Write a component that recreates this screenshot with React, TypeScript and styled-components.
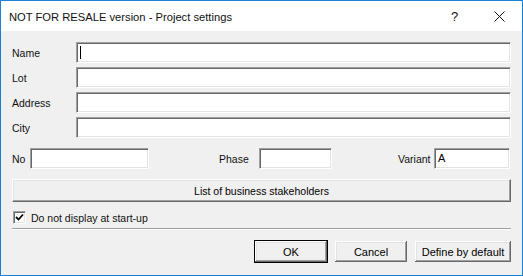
import React from "react";
import styled, { createGlobalStyle } from "styled-components";

const Global = createGlobalStyle`
    html, body {
        margin: 0;
        padding: 0;
        background: #ffffff;
    }
    * {
        box-sizing: border-box;
    }
`

const Window = styled.div`
    width: 523px;
    height: 276px;
    border: 1px solid #1c7fd4;
    background: #f0f0f0;
    display: flex;
    flex-direction: column;
    font-family: "Liberation Sans", Arial, sans-serif;
    font-size: 10.5px;
    color: #000;
`
const TitleBar = styled.div`
    height: 30px;
    background: #ffffff;
    display: flex;
    align-items: center;
    padding-left: 8px;
    flex-shrink: 0;
`
const Title = styled.div`
    flex: 1;
    font-family: "Segoe UI", "Liberation Sans", sans-serif;
    font-size: 11.2px;
    color: #111;
    padding-top: 1px;
`
const TitleButton = styled.div`
    width: 45px;
    height: 29px;
    display: flex;
    align-items: center;
    justify-content: center;
    font-family: "Segoe UI", "Liberation Sans", sans-serif;
    font-size: 13px;
    color: #111;
`
const Body = styled.div`
    flex: 1;
    display: flex;
    flex-direction: column;
    padding: 11px 11px 0 11px;
`
const FieldGrid = styled.div`
    display: grid;
    grid-template-columns: 64px 1fr;
    grid-auto-rows: 21px;
    row-gap: 4px;
    align-items: center;
`
const Label = styled.div<{ $width?: number }>`
    width: ${p => (p.$width ? `${p.$width}px` : "auto")};
    flex-shrink: 0;
    white-space: nowrap;
    padding-top: 1px;
    color: #111;
`
const Field = styled.div<{ $width?: number }>`
    height: 21px;
    width: ${p => (p.$width ? `${p.$width}px` : "auto")};
    background: #ffffff;
    border-top: 1px solid #a0a0a0;
    border-left: 1px solid #a0a0a0;
    border-bottom: 1px solid #ffffff;
    border-right: 1px solid #ffffff;
    box-shadow: inset 1px 1px 0 #696969, inset -1px -1px 0 #e3e3e3;
    display: flex;
    align-items: center;
    padding-left: 3px;
    font-size: 11px;
`
const Caret = styled.span`
    display: inline-block;
    width: 1px;
    height: 13px;
    background: #000;
`
const InfoRow = styled.div`
    display: grid;
    grid-template-columns: 207px 179px 1fr;
    margin-top: 9px;
    height: 22px;
`
const Group = styled.div`
    display: flex;
    align-items: center;
`
const WideButton = styled.div`
    margin-top: 10px;
    height: 23px;
    display: flex;
    align-items: center;
    justify-content: center;
    background: #f0f0f0;
    border-top: 1px solid #ffffff;
    border-left: 1px solid #ffffff;
    border-bottom: 1px solid #696969;
    border-right: 1px solid #696969;
    box-shadow: inset -1px -1px 0 #a0a0a0, inset 1px 1px 0 #e3e3e3;
`
const CheckRow = styled.div`
    display: flex;
    align-items: center;
    gap: 5px;
    margin-top: 8px;
    padding-left: 1px;
    height: 15px;
`
const CheckBox = styled.div`
    width: 13px;
    height: 13px;
    background: #ffffff;
    border-top: 1px solid #a0a0a0;
    border-left: 1px solid #a0a0a0;
    border-bottom: 1px solid #ffffff;
    border-right: 1px solid #ffffff;
    box-shadow: inset 1px 1px 0 #696969, inset -1px -1px 0 #e3e3e3;
    display: flex;
    align-items: center;
    justify-content: center;
`
const Separator = styled.div`
    margin-top: 3px;
    height: 2px;
    border-top: 1px solid #a0a0a0;
    border-bottom: 1px solid #ffffff;
`
const ButtonRow = styled.div`
    display: flex;
    justify-content: flex-end;
    gap: 6px;
    margin-top: 10px;
    margin-right: -1px;
`
const DialogButton = styled.div<{ $width: number; $default?: boolean }>`
    width: ${p => p.$width}px;
    height: 23px;
    display: flex;
    align-items: center;
    justify-content: center;
    background: #f0f0f0;
    border: 1px solid ${p => (p.$default ? "#000" : "transparent")};
    box-shadow: inset -1px -1px 0 #696969, inset 1px 1px 0 #ffffff,
        inset -2px -2px 0 #a0a0a0, inset 2px 2px 0 #e3e3e3;
    font-size: 11px;
`

const CloseIcon = () => (
    <svg width="11" height="11" viewBox="0 0 11 11">
        <path d="M0.5 0.5 L10.5 10.5 M10.5 0.5 L0.5 10.5" stroke="#111" strokeWidth="1" fill="none" />
    </svg>
)

const CheckMark = () => (
    <svg width="9" height="9" viewBox="0 0 9 9">
        <path d="M1 4 L3.5 6.5 L8 1.5" stroke="#000" strokeWidth="1.8" fill="none" />
    </svg>
)

const fields = ["Name", "Lot", "Address", "City"]

const App = () => {
    return (
        <>
            <Global />
            <Window>
                <TitleBar>
                    <Title>NOT FOR RESALE version - Project settings</Title>
                    <TitleButton>?</TitleButton>
                    <TitleButton>
                        <CloseIcon />
                    </TitleButton>
                </TitleBar>
                <Body>
                    <FieldGrid>
                        {fields.map(f => (
                            <React.Fragment key={f}>
                                <Label>{f}</Label>
                                <Field>{f === "Name" && <Caret />}</Field>
                            </React.Fragment>
                        ))}
                    </FieldGrid>
                    <InfoRow>
                        <Group>
                            <Label $width={18}>No</Label>
                            <Field $width={119} />
                        </Group>
                        <Group>
                            <Label $width={40}>Phase</Label>
                            <Field $width={73} />
                        </Group>
                        <Group>
                            <Label $width={36}>Variant</Label>
                            <Field $width={76}>A</Field>
                        </Group>
                    </InfoRow>
                    <WideButton>List of business stakeholders</WideButton>
                    <CheckRow>
                        <CheckBox>
                            <CheckMark />
                        </CheckBox>
                        <Label>Do not display at start-up</Label>
                    </CheckRow>
                    <Separator />
                    <ButtonRow>
                        <DialogButton $width={74} $default>OK</DialogButton>
                        <DialogButton $width={74}>Cancel</DialogButton>
                        <DialogButton $width={98}>Define by default</DialogButton>
                    </ButtonRow>
                </Body>
            </Window>
        </>
    )
}
export default App;
